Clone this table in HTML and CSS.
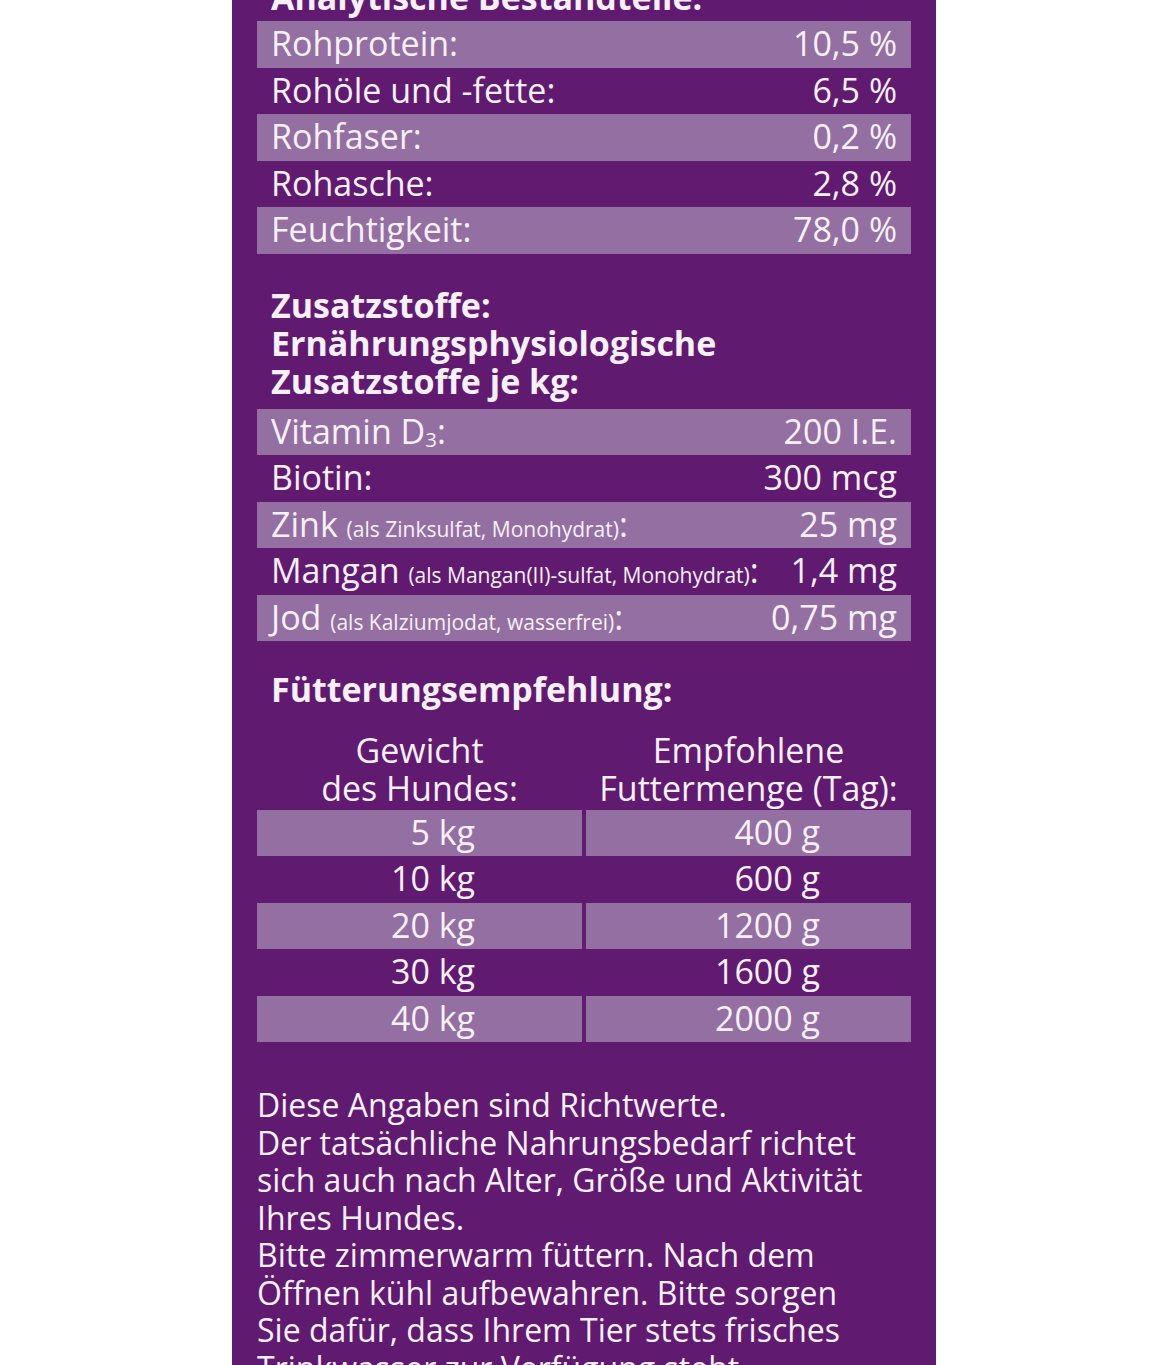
FILE: index.html
```html
<!DOCTYPE html>
<html lang="de">
<head>
<meta charset="utf-8">
<title>Analytische Bestandteile</title>
<link rel="stylesheet" href="styles.css">
</head>
<body>
<div class="panel">
  <h2 class="heading first">Analytische Bestandteile:</h2>
  <div class="table">
    <div class="row band"><span>Rohprotein:</span><span>10,5 %</span></div>
    <div class="row"><span>Rohöle und -fette:</span><span>6,5 %</span></div>
    <div class="row band"><span>Rohfaser:</span><span>0,2 %</span></div>
    <div class="row"><span>Rohasche:</span><span>2,8 %</span></div>
    <div class="row band"><span>Feuchtigkeit:</span><span>78,0 %</span></div>
  </div>

  <h2 class="heading second">Zusatzstoffe:<br>Ernährungsphysiologische<br>Zusatzstoffe je kg:</h2>
  <div class="table">
    <div class="row band"><span>Vitamin D<sub class="sub">3</sub>:</span><span>200 I.E.</span></div>
    <div class="row"><span>Biotin:</span><span>300 mcg</span></div>
    <div class="row band"><span>Zink <small class="note">(als Zinksulfat, Monohydrat)</small>:</span><span>25 mg</span></div>
    <div class="row"><span>Mangan <small class="note">(als Mangan(II)-sulfat, Monohydrat)</small>:</span><span>1,4 mg</span></div>
    <div class="row band"><span>Jod <small class="note">(als Kalziumjodat, wasserfrei)</small>:</span><span>0,75 mg</span></div>
  </div>

  <h2 class="heading third">Fütterungsempfehlung:</h2>
  <div class="feed">
    <div class="feed-head">Gewicht<br>des Hundes:</div>
    <div class="feed-head">Empfohlene<br>Futtermenge (Tag):</div>
    <div class="cell left band">5 kg</div><div class="cell right band">400 g</div>
    <div class="cell left">10 kg</div><div class="cell right">600 g</div>
    <div class="cell left band">20 kg</div><div class="cell right band">1200 g</div>
    <div class="cell left">30 kg</div><div class="cell right">1600 g</div>
    <div class="cell left band">40 kg</div><div class="cell right band">2000 g</div>
  </div>

  <p class="notes">Diese Angaben sind Richtwerte.<br>Der tatsächliche Nahrungsbedarf richtet<br>sich auch nach Alter, Größe und Aktivität<br>Ihres Hundes.<br>Bitte zimmerwarm füttern. Nach dem<br>Öffnen kühl aufbewahren. Bitte sorgen<br>Sie dafür, dass Ihrem Tier stets frisches<br>Trinkwasser zur Verfügung steht.</p>
</div>
</body>
</html>
```

FILE: styles.css
```css
html, body {
  margin: 0;
  padding: 0;
  background: #ffffff;
  overflow: hidden;
}

.panel {
  width: 704px;
  height: 1365px;
  margin-left: 232px;
  box-sizing: border-box;
  padding: 0 25px;
  background: #601a70;
  color: #f8f0f8;
  font-family: "Open Sans", "Liberation Sans", sans-serif;
  overflow: hidden;
}

.heading {
  margin: 0;
  padding-left: 14px;
  font-size: 34px;
  font-weight: 700;
  line-height: 38px;
  white-space: nowrap;
}

.heading.first {
  margin-top: -22px;
  margin-bottom: 5px;
}

.heading.second {
  margin-top: 32.5px;
  margin-bottom: 8.5px;
}

.heading.third {
  margin-top: 29px;
  margin-bottom: 23px;
}

.table {
  display: flex;
  flex-direction: column;
}

.row {
  display: flex;
  justify-content: space-between;
  align-items: baseline;
  height: 46.5px;
  box-sizing: border-box;
  padding: 0 14px 2.5px;
  font-size: 34px;
  line-height: 44px;
  white-space: nowrap;
}

.band {
  background: #936fa2;
}

.sub {
  font-size: 0.6em;
  vertical-align: -0.15em;
  line-height: 0;
}

.note {
  font-size: 21px;
}

.feed {
  display: grid;
  grid-template-columns: 1fr 1fr;
  column-gap: 4px;
}

.feed-head {
  text-align: center;
  font-size: 34px;
  line-height: 38px;
  margin-bottom: 2.5px;
  white-space: nowrap;
}

.cell {
  height: 46.5px;
  box-sizing: border-box;
  padding-bottom: 2.5px;
  font-size: 34px;
  line-height: 44px;
  text-align: right;
  white-space: nowrap;
}

.cell.left {
  padding-right: 107px;
}

.cell.right {
  padding-right: 91px;
}

.notes {
  margin: 44px 0 0;
  font-size: 32px;
  line-height: 37.5px;
  white-space: nowrap;
}
```
